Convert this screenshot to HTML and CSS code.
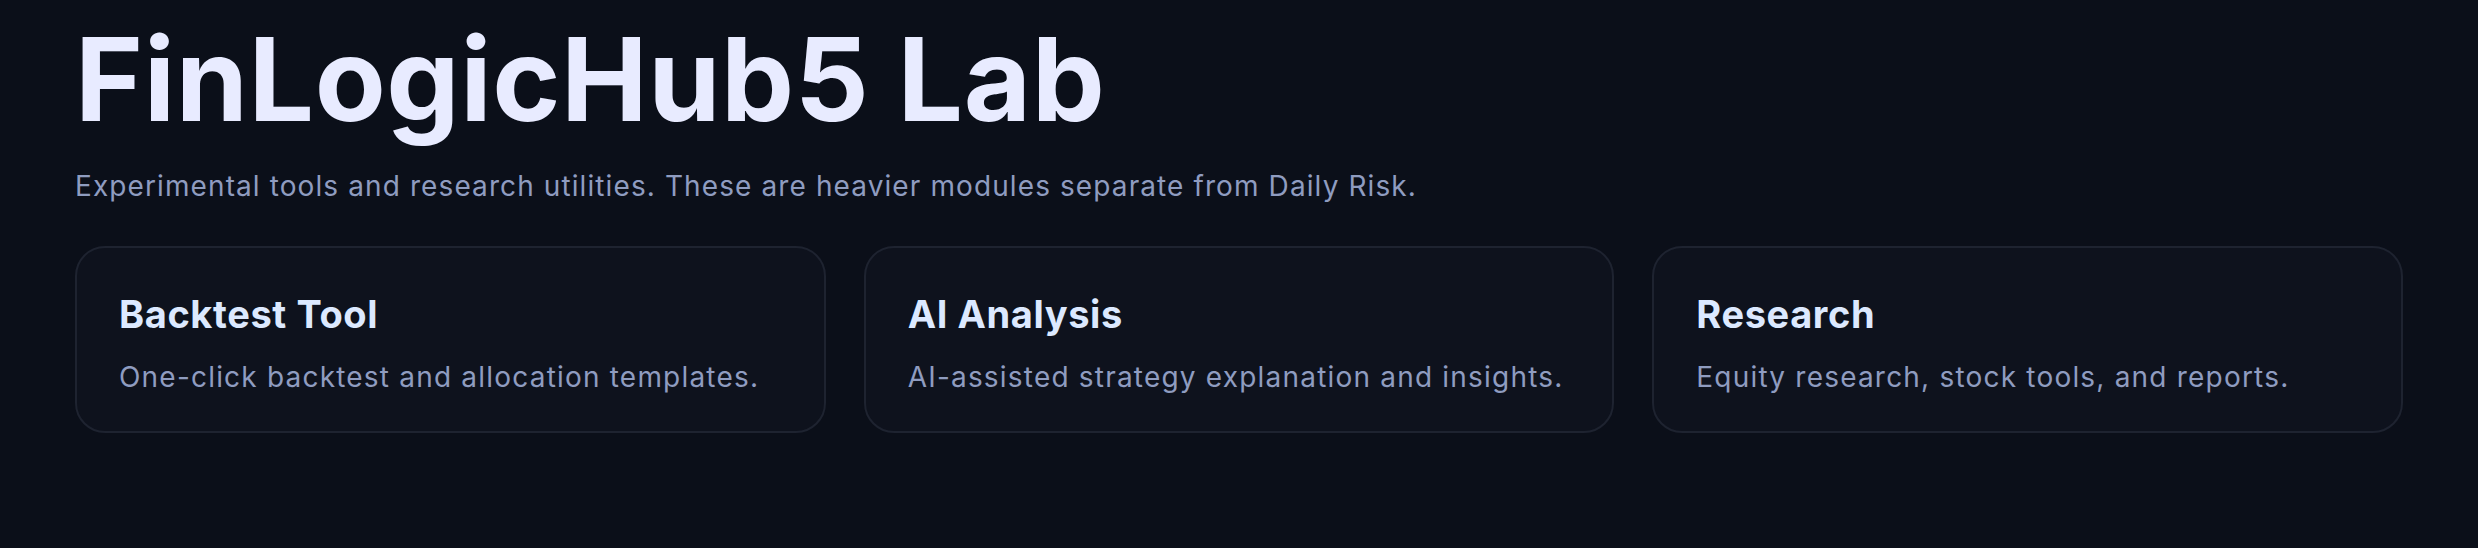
FILE: index.html
```html
<!DOCTYPE html>
<html lang="en">
  <head>
    <meta charset="UTF-8" />
    <meta name="viewport" content="width=device-width, initial-scale=1.0" />
    <title>FinLogicHub5 Lab</title>
    <link rel="stylesheet" href="styles.css">
  </head>
  <body>
    <div class="page">
      <h1 class="title">FinLogicHub5 Lab</h1>
      <p class="subtitle">
        Experimental tools and research utilities. These are heavier modules separate from Daily Risk.
      </p>

      <div class="cards">
        <a class="card" href="#backtest">
          <h3 class="card-title">Backtest Tool</h3>
          <p class="card-desc">One-click backtest and allocation templates.</p>
        </a>
        <a class="card" href="#ai">
          <h3 class="card-title">AI Analysis</h3>
          <p class="card-desc">AI-assisted strategy explanation and insights.</p>
        </a>
        <a class="card" href="#research">
          <h3 class="card-title">Research</h3>
          <p class="card-desc">Equity research, stock tools, and reports.</p>
        </a>
      </div>
    </div>
  </body>
</html>
```

FILE: styles.css
```css
* {
  margin: 0;
  padding: 0;
  box-sizing: border-box;
}
body {
  font-family: Inter, "Noto Sans", sans-serif;
  background-color: #0b0f19;
  color: #e8ebff;
}
.page {
  padding: 10px 75px 40px;
}
.title {
  font-size: 116px;
  font-weight: 700;
  line-height: 1.2;
  letter-spacing: 0.005em;
  color: #e8ebff;
}
.subtitle {
  margin-top: 18px;
  font-size: 28px;
  line-height: 1.4;
  letter-spacing: 1.1px;
  color: #8f9cc0;
}
.cards {
  display: grid;
  grid-template-columns: repeat(3, 1fr);
  gap: 38px;
  margin-top: 40px;
}
.card {
  display: block;
  text-decoration: none;
  background: #0e121d;
  border: 2px solid #1e2330;
  border-radius: 30px;
  padding: 44px 20px 32px 42px;
  min-height: 187px;
}
.card-title {
  font-size: 38px;
  font-weight: 700;
  line-height: 1.2;
  letter-spacing: 0.6px;
  color: #dce9ff;
}
.card-desc {
  margin-top: 20px;
  font-size: 28px;
  line-height: 1.4;
  letter-spacing: 1.2px;
  white-space: nowrap;
  color: #8f9cc0;
}
```
